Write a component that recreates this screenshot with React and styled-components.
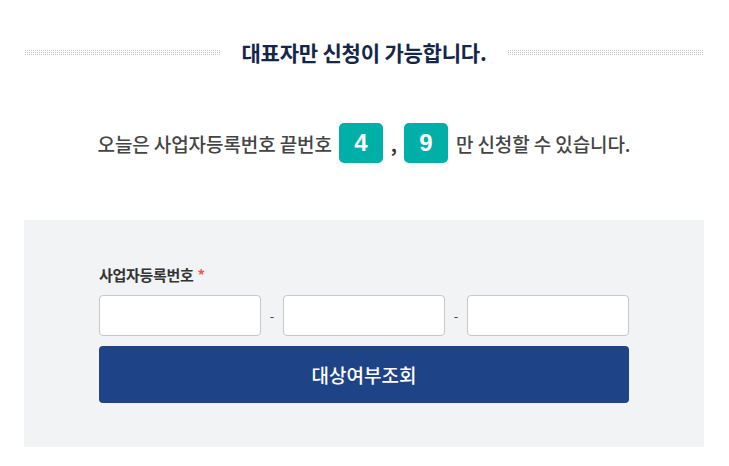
import styled, { createGlobalStyle } from "styled-components";

const GlobalStyle = createGlobalStyle`
  body {
    margin: 0;
    background: #fff;
    font-family: "Noto Sans CJK KR", "Noto Sans", sans-serif;
  }
`;

const Page = styled.div`
  padding: 0 25px 0 24px;
  width: 729px;
  box-sizing: border-box;
`;

const TitleRow = styled.div`
  display: flex;
  align-items: center;
  padding-top: 37px;
  height: 30px;
`;

// grid of 1px grey dots on a 2px pitch
const DotLine = styled.div`
  flex: 1;
  height: 7px;
  background-color: #c6c6c6;
  background-image:
    linear-gradient(90deg, #fff 1px, transparent 1px),
    linear-gradient(#fff 1px, transparent 1px);
  background-size: 2px 2px;
`;

const Title = styled.h2`
  margin: 0;
  padding: 0 20px;
  font-size: 21px;
  font-weight: 700;
  color: #14264a;
  letter-spacing: -0.2px;
`;

const Notice = styled.div`
  display: flex;
  align-items: center;
  justify-content: center;
  margin-top: 56px;
  font-size: 19px;
  font-weight: 500;
  color: #444;
  letter-spacing: -0.1px;
`;

const Digit = styled.span`
  display: inline-flex;
  align-items: center;
  justify-content: center;
  width: 44px;
  height: 40px;
  margin: 0 8px 0 7px;
  border-radius: 5px;
  background: #00b0a8;
  color: #fff;
  font-family: "Liberation Sans", Arial, sans-serif;
  font-size: 24px;
  font-weight: 700;
`;

const Comma = styled.span`
  font-weight: 700;
  color: #333;
`;

const Panel = styled.div`
  margin-top: 57px;
  background: #f2f3f5;
  padding: 45px 0 44px;
`;

const Form = styled.div`
  width: 530px;
  margin: 0 auto;
`;

const Label = styled.div`
  font-size: 15px;
  font-weight: 700;
  color: #333;
  letter-spacing: -0.3px;
  line-height: 20px;
  margin-bottom: 10px;

  span {
    color: #f05a4f;
    margin-left: 4px;
  }
`;

const Inputs = styled.div`
  display: flex;
  align-items: center;
`;

const Input = styled.input`
  width: 162px;
  height: 41px;
  box-sizing: border-box;
  border: 1px solid #c8c8c8;
  border-radius: 4px;
  background: #fff;
  outline: none;
`;

const Dash = styled.span`
  width: 22px;
  text-align: center;
  font-size: 13px;
  color: #444;
`;

const SubmitButton = styled.button`
  display: block;
  width: 530px;
  height: 57px;
  margin-top: 10px;
  border: 0;
  border-radius: 4px;
  background: #1e4487;
  color: #fff;
  font-family: inherit;
  font-size: 19px;
  font-weight: 500;
  cursor: pointer;
`;

export default function App() {
  return (
    <>
      <GlobalStyle />
      <Page>
        <TitleRow>
          <DotLine />
          <Title>대표자만 신청이 가능합니다.</Title>
          <DotLine />
        </TitleRow>

        <Notice>
          오늘은 사업자등록번호 끝번호
          <Digit>4</Digit>
          <Comma>,</Comma>
          <Digit>9</Digit>
          만 신청할 수 있습니다.
        </Notice>

        <Panel>
          <Form>
            <Label>
              사업자등록번호<span>*</span>
            </Label>
            <Inputs>
              <Input />
              <Dash>-</Dash>
              <Input />
              <Dash>-</Dash>
              <Input />
            </Inputs>
            <SubmitButton>대상여부조회</SubmitButton>
          </Form>
        </Panel>
      </Page>
    </>
  );
}
